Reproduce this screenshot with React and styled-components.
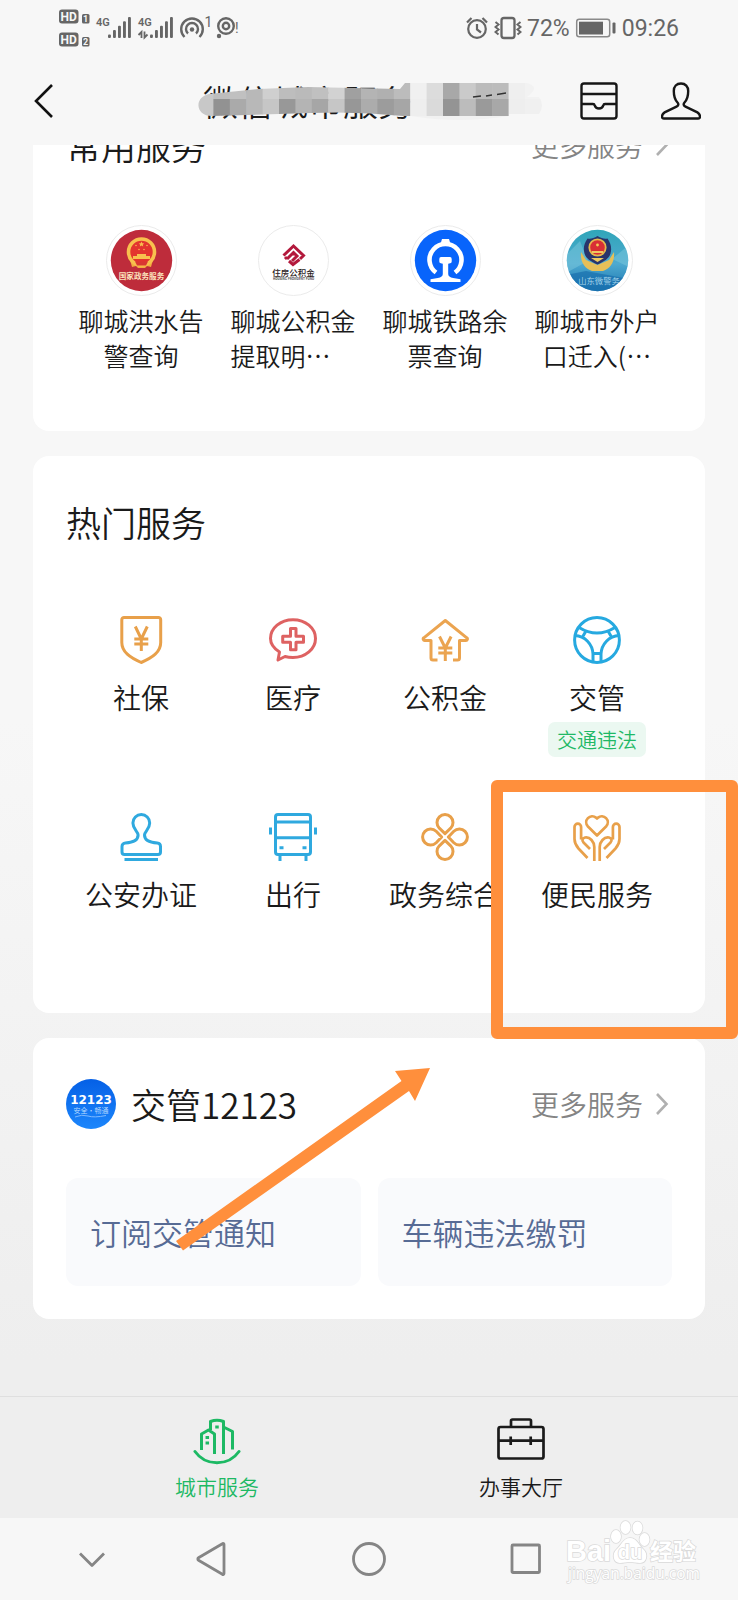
import React, { useState } from 'react';
import styled, { createGlobalStyle } from 'styled-components';

const FONT = '"Noto Sans CJK SC", sans-serif';

const commonServices = [
  { name: '聊城洪水告警查询', lines: ['聊城洪水告', '警查询'], Logo: GovLogo },
  {
    name: '聊城公积金提取明细',
    lines: ['聊城公积金', '提取明…'],
    Logo: FundLogo,
    align: 'left',
  },
  { name: '聊城铁路余票查询', lines: ['聊城铁路余', '票查询'], Logo: RailLogo },
  { name: '聊城市外户口迁入', lines: ['聊城市外户', '口迁入(…'], Logo: PoliceLogo },
];

const hotServices = [
  { name: '社保', Icon: ShieldIcon, color: '#e8a04a' },
  { name: '医疗', Icon: MedicalIcon, color: '#de6262' },
  { name: '公积金', Icon: HouseIcon, color: '#eba450' },
  { name: '交管', Icon: WheelIcon, color: '#26a9e0', badge: '交通违法' },
  { name: '公安办证', Icon: StampIcon, color: '#2fa9df' },
  { name: '出行', Icon: BusIcon, color: '#2fa9df' },
  { name: '政务综合', Icon: CloverIcon, color: '#e8a04a' },
  { name: '便民服务', Icon: HandsIcon, color: '#e8a04a' },
];

const tabs = [
  { name: '城市服务', Icon: CityIcon },
  { name: '办事大厅', Icon: BriefcaseIcon },
];

function App() {
  const [activeTab, setActiveTab] = useState(0);

  return (
    <Page>
      <GlobalStyle />
      <StatusBar>
        <SignalIcons />
        <StatusRight>
          <AlarmIcon />
          <VibrateIcon />
          <span>72%</span>
          <BatteryIcon />
          <span>09:26</span>
        </StatusRight>
      </StatusBar>

      <Header>
        <IconButton type="button" aria-label="返回">
          <svg width="22" height="36" viewBox="0 0 22 36">
            <path d="M19 2 3 18l16 16" fill="none" stroke="#111" strokeWidth="2.6" />
          </svg>
        </IconButton>
        <TitleBox>
          <h1>微信城市服务</h1>
          <Mosaic />
        </TitleBox>
        <HeaderActions>
          <IconButton type="button" aria-label="卡包">
            <InboxIcon />
          </IconButton>
          <IconButton type="button" aria-label="我的">
            <PersonIcon />
          </IconButton>
        </HeaderActions>
      </Header>

      <Content>
        <Card $scrolled>
          <CardHeader>
            <h2>常用服务</h2>
            <MoreLink />
          </CardHeader>
          <LogoGrid>
            {commonServices.map(({ name, lines, Logo, align }) => (
              <ServiceItem type="button" key={name}>
                <Logo />
                <LogoLabel $align={align}>
                  {lines[0]}
                  <br />
                  {lines[1]}
                </LogoLabel>
              </ServiceItem>
            ))}
          </LogoGrid>
        </Card>

        <Card>
          <CardHeader>
            <h2>热门服务</h2>
          </CardHeader>
          <HotGrid>
            {hotServices.map(({ name, Icon, color, badge }) => (
              <ServiceItem type="button" key={name} $color={color}>
                <Icon />
                <HotLabel>{name}</HotLabel>
                {badge && <Badge>{badge}</Badge>}
              </ServiceItem>
            ))}
          </HotGrid>
          <Highlight />
        </Card>

        <Card>
          <CardHeader>
            <TrafficLogo />
            <h2>交管12123</h2>
            <MoreLink />
          </CardHeader>
          <ActionRow>
            <ActionButton type="button">订阅交管通知</ActionButton>
            <ActionButton type="button">车辆违法缴罚</ActionButton>
          </ActionRow>
          <Arrow width="260" height="190" viewBox="0 0 260 190">
            <path d="M257 2 222 5l6.500 10L3 175l7 9.500L236 25l6 10z" fill="#ff8f3c" />
          </Arrow>
        </Card>
      </Content>

      <TabBar>
        {tabs.map(({ name, Icon }, index) => (
          <Tab
            type="button"
            key={name}
            $active={index === activeTab}
            onClick={() => setActiveTab(index)}
          >
            <Icon />
            <span>{name}</span>
          </Tab>
        ))}
      </TabBar>

      <SystemNav>
        <IconButton type="button" aria-label="收起">
          <NavSvg>
            <path d="M6 12.500l12 12 12-12" />
          </NavSvg>
        </IconButton>
        <IconButton type="button" aria-label="后退">
          <NavSvg>
            <path d="M31 3.500v29a1 1 0 0 1-1.600.8L5.500 19.200a1.400 1.400 0 0 1 0-2.400L29.400 2.700a1 1 0 0 1 1.600.8z" />
          </NavSvg>
        </IconButton>
        <IconButton type="button" aria-label="主页">
          <NavSvg>
            <circle cx="18" cy="18" r="15.500" />
          </NavSvg>
        </IconButton>
        <IconButton type="button" aria-label="最近任务">
          <NavSvg>
            <rect x="3" y="4" width="27.500" height="27.500" rx="1" />
          </NavSvg>
        </IconButton>
        <Watermark />
      </SystemNav>
    </Page>
  );
}

export default App;

function MoreLink() {
  return (
    <More href="#more">
      更多服务
      <svg width="14" height="24" viewBox="0 0 14 24">
        <path d="M2 2l9.500 10L2 22" fill="none" stroke="#b0b0b0" strokeWidth="2.600" />
      </svg>
    </More>
  );
}

/* status bar */

function SignalIcons() {
  return (
    <svg width="246" height="56" viewBox="0 0 246 56" fill="#666" fontFamily="Roboto, sans-serif" fontWeight="400">
      <rect x="59" y="9.500" width="19.500" height="14" rx="3" />
      <rect x="59" y="32.500" width="19.500" height="14" rx="3" />
      <rect x="82" y="14" width="7.500" height="9.500" rx="1.500" />
      <rect x="82" y="37" width="7.500" height="9.500" rx="1.500" />
      <g fill="#f7f7f7" fontWeight="700" textAnchor="middle">
        <text x="68.700" y="20.700" fontSize="12">HD</text>
        <text x="68.700" y="43.700" fontSize="12">HD</text>
        <text x="85.700" y="22" fontSize="9">1</text>
        <text x="85.700" y="45" fontSize="9">2</text>
      </g>
      <g fontSize="11" fontWeight="600">
        <text x="96" y="26">4G</text>
        <text x="138" y="26">4G</text>
      </g>
      {[0, 1, 2, 3, 4].map((i) => (
        <rect key={i} x={108 + i * 5} y={34.5 - i * 4.4} width="2.900" height={3.5 + i * 4.4} rx="1" />
      ))}
      {[0, 1, 2, 3, 4].map((i) => (
        <rect key={i} x={150 + i * 5} y={34.5 - i * 4.4} width="2.900" height={3.5 + i * 4.4} rx="1" />
      ))}
      <path d="M141.500 38v-6l-3 3M144.500 31.500v6l3-3" fill="none" stroke="#666" strokeWidth="1.800" />
      <g fill="none" stroke="#666" strokeWidth="2.400">
        <path d="M184.500 37a10.800 10.800 0 1 1 15 0" />
        <path d="M188 33.500a6 6 0 1 1 8 0" />
        <circle cx="226" cy="26" r="7.800" />
        <circle cx="226" cy="26" r="3.200" />
      </g>
      <circle cx="192" cy="29.500" r="2.200" />
      <circle cx="219" cy="36" r="2.200" />
      <text x="204.500" y="27" fontSize="14">1</text>
      <text x="235" y="33" fontSize="14">!</text>
    </svg>
  );
}

function AlarmIcon() {
  return (
    <svg width="24" height="24" viewBox="0 0 24 24" fill="none" stroke="#666" strokeWidth="2.200">
      <circle cx="12" cy="13" r="8.800" />
      <path d="M12 8v5.500l4 3M2 6.500 6.500 2M22 6.500 17.500 2" />
    </svg>
  );
}

function VibrateIcon() {
  return (
    <svg width="28" height="24" viewBox="0 0 28 24" fill="none" stroke="#666" strokeWidth="2.300">
      <rect x="7.500" y="2" width="13" height="20" rx="2.500" />
      <path d="M1.500 6l3 2.500-3 2.500 3 2.500-3 2.500 3 2.500M26.500 6l-3 2.500 3 2.500-3 2.500 3 2.500-3 2.500" strokeWidth="2" />
    </svg>
  );
}

function BatteryIcon() {
  return (
    <svg width="42" height="22" viewBox="0 0 42 22">
      <rect x="1.700" y="2.200" width="33" height="17.600" rx="2.500" fill="none" stroke="#8a8a8a" strokeWidth="1.500" />
      <rect x="4" y="4.700" width="24" height="12.800" fill="#666" />
      <rect x="37.500" y="5.500" width="3" height="11" rx="1" fill="#666" />
    </svg>
  );
}

/* header */

const mosaicTop = [
  '#c8c8c8', '#bdbdbd', '#c0c0c0', '#b8b8b8', '#cfcfcf', '#bdbdbd', '#bababa',
  '#c0c0c0', '#d2d2d2', '#a0a0a0', '#b4b4b4', '#b0b0b0', '#bcbcbc', '#f0f0f0',
  '#dcdcdc', '#a8a8a8', '#cacaca', '#bbbbbb', '#bcbcbc', '#efefef', '#f2f2f2',
];
const mosaicBottom = [
  '#c8c8c8', '#929292', '#aaaaaa', '#b8b8b8', '#c6c6c6', '#989898', '#b4b4b4',
  '#a6a6a6', '#c6c6c6', '#979797', '#acacac', '#9c9c9c', '#a6a6a6', '#eeeeee',
  '#dadada', '#949494', '#bcbcbc', '#9a9a9a', '#a8a8a8', '#eeeeee', '#f0f0f0',
];

// Blurred-out part of the title
function Mosaic() {
  return (
    <MosaicSvg width="346" height="40" viewBox="0 0 346 40">
      <clipPath id="brush">
        <path d="M11 13 60 8 110 6 202 8 207 2h122q14 4 0 14h12q6 8 0 17h-30v2q-50 8-98 0l-8 0q-46-5-92-3L14 35C-3 35-4 16 11 13z" />
      </clipPath>
      <g clipPath="url(#brush)">
        {mosaicTop.map((color, i) => (
          <rect key={i} x={i * 16.4 - 1} y="0" width="17" height="18.500" fill={color} />
        ))}
        {mosaicBottom.map((color, i) => (
          <rect key={i} x={i * 16.4 - 1} y="18" width="17" height="17" fill={color} />
        ))}
        <rect x="212" y="35" width="130" height="5" fill="#f1f1f1" />
      </g>
      <path d="M275 16l8-1M288 15l6-1M299 13.500l9-1.500" stroke="#333" strokeWidth="1.300" />
    </MosaicSvg>
  );
}

function InboxIcon() {
  return (
    <svg width="38" height="38" viewBox="0 0 38 38" fill="none" stroke="#161616" strokeWidth="2.400">
      <rect x="1.500" y="1.500" width="35" height="35" rx="2.500" />
      <path d="M1.500 12h35M1.500 22h11.500c1 0 1.500.5 1.700 1.400a4.500 4.500 0 0 0 8.600 0c.2-.9.7-1.400 1.700-1.400h11.500" />
    </svg>
  );
}

function PersonIcon() {
  return (
    <svg width="40" height="38" viewBox="0 0 40 38" fill="none" stroke="#161616" strokeWidth="2.400">
      <path d="M20 1.500c-4.500 0-7.200 3-7.200 7.500 0 4.500 1.300 9 3.700 11.500 1.500 1.600.8 3.400-1 4.200L3.600 30.400C1.500 31.600 1 33 1 34.800c0 1.200.6 1.700 1.800 1.700h34.400c1.200 0 1.800-.5 1.800-1.700 0-1.800-.5-3.200-2.600-4.400l-11.900-5.700c-1.800-.8-2.500-2.600-1-4.200 2.400-2.500 3.700-7 3.700-11.500 0-4.500-2.700-7.500-7.200-7.500z" />
    </svg>
  );
}

/* round service logos */

function GovLogo() {
  return (
    <LogoSvg viewBox="0 0 71 71">
      <circle cx="35.500" cy="35.500" r="35" fill="#fff" stroke="#ebebeb" />
      <circle cx="35.500" cy="35.500" r="30.700" fill="#be2c3b" />
      <path d="M24 35h23l-2 7-4-1-2 2h-7l-2-2-4 1z" fill="#f3ac3f" />
      <circle cx="35.500" cy="27" r="13" fill="#e3342f" stroke="#f8c04e" strokeWidth="3.600" />
      <path d="M27 34h17v-3h-4v-2h-9v2h-4z" fill="#f8c04e" />
      <path d="M29 36.500h13l-2 4h-9z" fill="#d93832" />
      <path d="M35.500 16.500l.8 1.700 1.900.2-1.400 1.300.4 1.900-1.700-1-1.700 1 .4-1.900-1.400-1.300 1.900-.2z" fill="#f8c04e" />
      <g fill="#f8b34b">
        <circle cx="30" cy="20.500" r=".8" />
        <circle cx="41" cy="20.500" r=".8" />
        <circle cx="33" cy="24.500" r=".8" />
        <circle cx="38" cy="24.500" r=".8" />
      </g>
      <text x="35.500" y="53.500" fontSize="7.600" fontWeight="700" textAnchor="middle" fill="#fbe3bd">
        国家政务服务
      </text>
    </LogoSvg>
  );
}

function FundLogo() {
  return (
    <LogoSvg viewBox="0 0 71 71">
      <circle cx="35.500" cy="35.500" r="35" fill="#fff" stroke="#ebebeb" />
      <g fill="none" stroke="#b3193c" strokeWidth="3">
        <path d="M25.500 30.500l10-9.500 10 9.500-3.500 3.500M29 34l6.500-6.500 3.500 3.500-5 5M29 34l-2-2M41.500 34.500l-6.500 5-4-3.500M35 27.500v3" />
      </g>
      <text x="35.500" y="50.500" fontSize="8.500" fontWeight="500" textAnchor="middle" fill="#2b2222">
        住房公积金
      </text>
      <text x="35.500" y="55" fontSize="3" fontWeight="700" textAnchor="middle" fill="#444">
        HOUSING PROVIDENT FUND
      </text>
    </LogoSvg>
  );
}

function RailLogo() {
  return (
    <LogoSvg viewBox="0 0 71 71">
      <circle cx="35.500" cy="35.500" r="35" fill="#fff" stroke="#ebebeb" />
      <circle cx="35.500" cy="35.500" r="30.700" fill="#0864fb" />
      <path d="M26 47.500a16 15.800 0 1 1 19 0" fill="none" stroke="#fff" strokeWidth="4.600" />
      <path d="M32 14h7l1.500 5h-10z" fill="#fff" />
      <path d="M31 32h9q1.700 0 1.700 2v2.500q0 1.500-1.500 1.700l-2 .5V49q0 3 5 4l7.300 1.200V57h-30v-2.800L27.800 53q5-1 5-4V38.700l-2-.5q-1.500-.2-1.500-1.700V34q0-2 1.700-2z" fill="#fff" />
    </LogoSvg>
  );
}

function PoliceLogo() {
  return (
    <LogoSvg viewBox="0 0 71 71">
      <defs>
        <linearGradient id="teal" x1="0" y1="0" x2="0" y2="1">
          <stop offset="0" stopColor="#2fa5b8" />
          <stop offset=".55" stopColor="#4eaad0" />
          <stop offset="1" stopColor="#1873b0" />
        </linearGradient>
        <clipPath id="policeClip">
          <circle cx="35.500" cy="35.500" r="30.700" />
        </clipPath>
      </defs>
      <circle cx="35.500" cy="35.500" r="35" fill="#fff" stroke="#ebebeb" />
      <g clipPath="url(#policeClip)">
        <rect x="4" y="4" width="63" height="63" fill="url(#teal)" />
        <path d="M4 30l14-14 8 20-22 12zM67 20L50 34l17 8z" fill="#7cc8dc" opacity=".5" />
        <path d="M4 50l20-4 43 8v13H4z" fill="#1a6fae" opacity=".7" />
        <path d="M19 27c-1 10 4 17 11 19h11c7-2 12-9 11-19l-5 8-11.500 5L24 35z" fill="#e6bf58" />
        <path d="M35.500 11c4 2.500 7 3 10 2.500 3 4.500 4 8 3.500 12.500-.6 6.500-5.500 10-13.500 13.500C27.500 36 22.600 32.500 22 26c-.5-4.500.5-8 3.500-12.500 3 .5 6 0 10-2.500z" fill="#29356b" />
        <circle cx="35.500" cy="22.500" r="8.200" fill="#d92f35" stroke="#e5b84d" strokeWidth="1.800" />
        <path d="M30 26h11v2H30zM29 33h13l-6.500 4z" fill="#efc95f" />
        <circle cx="35.500" cy="20" r="1.400" fill="#f3cd55" />
        <text x="37" y="59" fontSize="8.300" textAnchor="middle" fill="#a9d7ec">
          山东微警务
        </text>
      </g>
    </LogoSvg>
  );
}

function TrafficLogo() {
  return (
    <svg width="50" height="50" viewBox="0 0 50 50">
      <defs>
        <linearGradient id="blue" x1="0" y1="0" x2="0" y2="1">
          <stop offset="0" stopColor="#0560e6" />
          <stop offset="1" stopColor="#1c86fb" />
        </linearGradient>
      </defs>
      <circle cx="25" cy="25" r="25" fill="url(#blue)" />
      <text x="25" y="25" fontSize="12" fontWeight="700" fontFamily="DejaVu Sans" textAnchor="middle" fill="#fff">
        12123
      </text>
      <text x="25" y="34" fontSize="7" textAnchor="middle" fill="#b9dcff">
        安全·畅通
      </text>
      <path d="M9 38q7-3 13-1t18-.500" fill="none" stroke="#7fbaff" />
    </svg>
  );
}

/* line icons, drawn in the colour of the item */

function ShieldIcon() {
  return (
    <LineSvg viewBox="0 0 48 48">
      <path d="M7 1.500h34.500a2.200 2.200 0 0 1 2.200 2.200V26.500c0 9.500-8 15-19.500 20C13 41.500 4.800 36 4.800 26.500V3.700A2.200 2.200 0 0 1 7 1.500z" />
      <path d="M18.300 10.500l6 12.500 6-12.500M24.300 23v12M17.300 23h14M17.300 28h14" />
    </LineSvg>
  );
}

function MedicalIcon() {
  return (
    <LineSvg viewBox="0 0 48 48">
      <path d="M9 44l1.500-8C5 32.500 1.500 28 1.500 22.500 1.500 12 11.500 3.700 24 3.700S46.500 12 46.500 22.500 36.500 41.500 24 41.500c-3 0-5.500-.3-8-1z" />
      <path d="M21.500 12.500h5.500v7.700h7.500v6H27v7.600h-5.500v-7.600H13.700v-6h7.800z" />
    </LineSvg>
  );
}

function HouseIcon() {
  return (
    <LineSvg viewBox="0 0 48 48">
      <path d="M16.500 44H12a2 2 0 0 1-2-2V24.500H3.800a1.500 1.500 0 0 1-1-2.700L24.300 4.500l21.500 17.300a1.500 1.500 0 0 1-1 2.700H38.500V42a2 2 0 0 1-2 2H32" />
      <path d="M18.500 20.500l5.800 11.500 5.800-11.500M24.300 32v13M17.300 32h14M17.300 37h14" />
    </LineSvg>
  );
}

function WheelIcon() {
  return (
    <LineSvg viewBox="0 0 48 48">
      <circle cx="24" cy="24" r="22.400" />
      <path d="M6 11.500Q24 22.500 42 11.500M1.800 19.500C12 20 19.500 28 20 38v8M46.200 19.500C36 20 28.500 28 28 38v8M20 37.500h8M9.500 21l3.500-6M38.500 21 35 15" />
    </LineSvg>
  );
}

function StampIcon() {
  return (
    <LineSvg viewBox="0 0 48 48">
      <path d="M7.500 41.500h33.500a2.500 2.500 0 0 0 2.500-2.500v-5.500a3.500 3.500 0 0 0-3.200-3.500C31 29.500 27.500 26.500 27.500 22c0-3.500 5.200-5.500 5.200-12a8.400 8.400 0 0 0-16.800 0c0 6.500 5.200 8.500 5.200 12 0 4.500-3.500 7.500-12.800 8A3.500 3.500 0 0 0 5 33.500V39a2.500 2.500 0 0 0 2.500 2.500zM7.500 46.500h33.500" />
    </LineSvg>
  );
}

function BusIcon() {
  return (
    <LineSvg viewBox="0 0 48 48">
      <rect x="6.500" y="1.500" width="35" height="40" rx="2.500" />
      <path d="M6.500 9h35M6.500 24.800h35M10.500 34.800h4M33.500 34.800h4M11 42v6M37 42v6M1.500 14.500v7M46.500 14.500v7" />
    </LineSvg>
  );
}

function CloverIcon() {
  return (
    <LineSvg viewBox="0 0 48 48">
      {[0, 90, 180, 270].map((angle) => (
        <path
          key={angle}
          d="M24 20.700l-5.700-5.500A8 8 0 1 1 29.700 15.200z"
          transform={`rotate(${angle} 24 24)`}
        />
      ))}
    </LineSvg>
  );
}

function HandsIcon() {
  const hand =
    'M14.500 45 5.500 35.500C2.500 32 1.500 30 1.500 26V14a3.300 3.300 0 0 1 6.600 0v12.500M17 36l-6.500-6.500c-2-2-1-4.500 1.500-5 5-1 9.300 4.500 9.300 9.500v14';
  return (
    <LineSvg viewBox="0 0 48 48" $thin>
      <path d="M24 22.500 14.700 13.200a6 6 0 0 1 8.300-8.600l1 1 1-1a6 6 0 0 1 8.300 8.600z" />
      <path d={hand} />
      <path d={hand} transform="matrix(-1 0 0 1 48 0)" />
    </LineSvg>
  );
}

function CityIcon() {
  return (
    <LineSvg viewBox="0 0 48 48">
      <path d="M2 34.500C12.500 49.500 35.500 49.500 46 34.500" strokeLinecap="round" />
      <path d="M8.500 33V17l7-4 6 4V37M17.500 13V4.500q6.500-2.500 13 0V37M31.500 10.500l8 4v18" />
      <path d="M14.300 19v3M14.300 24.500v3M24 8.500v3" strokeWidth="3.500" />
    </LineSvg>
  );
}

function BriefcaseIcon() {
  return (
    <LineSvg viewBox="0 0 48 48" $thin>
      <rect x="1.500" y="10" width="45" height="31.500" rx="2" />
      <path d="M14 10V4q0-1.500 1.500-1.500h17Q34 2.500 34 4v6M1.500 23.700h45M13.700 19.500v8.500M33.700 19.500v8.500" />
    </LineSvg>
  );
}

function Watermark() {
  return (
    <WatermarkSvg width="140" height="72" viewBox="0 0 140 72" aria-hidden="true">
      <g fill="#fff" stroke="#dadada" strokeWidth="1.500" paintOrder="stroke">
        <text x="4" y="45" fontSize="29" fontWeight="700" fontFamily="Liberation Sans">
          Bai
        </text>
        <ellipse cx="54" cy="20.500" rx="5" ry="6.500" />
        <ellipse cx="63.500" cy="11.500" rx="5" ry="6.500" />
        <ellipse cx="75.500" cy="12" rx="5" ry="6.500" />
        <ellipse cx="82.500" cy="23.500" rx="5" ry="6.500" />
        <path d="M68 22c-7 0-9 8-14 12-4 4-3 13 4 13 4 0 6-1 10-1s6 1 10 1c7 0 8-9 4-13-5-4-7-12-14-12z" />
        <text x="68" y="43" fontSize="20" fontWeight="700" fontFamily="Liberation Sans" textAnchor="middle">
          du
        </text>
        <text x="88" y="44" fontSize="23" fontWeight="700">
          经验
        </text>
        <text x="6" y="63" fontSize="15.500" fontWeight="400" fontFamily="Open Sans">
          jingyan.baidu.com
        </text>
      </g>
    </WatermarkSvg>
  );
}

const GlobalStyle = createGlobalStyle`
  * {
    box-sizing: border-box;
  }
  body {
    margin: 0;
    background: #f7f7f7;
    font-family: ${FONT};
    font-weight: 350;
    color: #1a1a1a;
  }
  h1, h2 {
    margin: 0;
    font-weight: inherit;
  }
  button {
    padding: 0;
    border: none;
    background: none;
    color: inherit;
    font-family: inherit;
    font-weight: inherit;
    cursor: pointer;
  }
  svg {
    display: block;
    flex-shrink: 0;
  }
`;

const Page = styled.div`
  min-height: 100vh;
  display: flex;
  flex-direction: column;
  overflow: hidden;
  background: linear-gradient(#f7f7f7 45%, #eeeeee 85%);
`;

const StatusBar = styled.div`
  display: flex;
  justify-content: space-between;
  height: 56px;
`;

const StatusRight = styled.div`
  display: flex;
  align-items: center;
  gap: 5px;
  padding-right: 59px;
  font-family: Roboto, sans-serif;
  font-size: 23px;
  font-weight: 400;
  color: #666666;
`;

const Header = styled.header`
  display: flex;
  align-items: center;
  height: 89px;
  padding: 0 37px 0 33px;
`;

const IconButton = styled.button`
  display: flex;
  align-items: center;
  justify-content: center;
`;

const TitleBox = styled.div`
  position: relative;
  flex: 1;
  margin-left: 148px;

  h1 {
    font-size: 35px;
    line-height: 48px;
    white-space: nowrap;
  }
`;

const MosaicSvg = styled.svg`
  position: absolute;
  left: -5px;
  top: 4px;
`;

const HeaderActions = styled.div`
  display: flex;
  gap: 43px;
`;

const Content = styled.main`
  flex: 1;
  display: flex;
  flex-direction: column;
  gap: 25px;
  padding: 0 33px 76px;
  overflow: hidden;
`;

const Card = styled.section`
  position: relative;
  padding: 33px 0;
  margin-top: ${({ $scrolled }) => ($scrolled ? '-66px' : '0')};
  border-radius: 16px;
  background: #ffffff;
`;

const CardHeader = styled.div`
  display: flex;
  align-items: center;
  height: 66px;
  padding: 0 33px;

  h2 {
    flex: 1;
    font-size: 35px;
    line-height: 50px;
  }
  svg + h2 {
    margin-left: 15px;
  }
`;

const More = styled.a`
  display: flex;
  align-items: center;
  gap: 12px;
  padding-right: 3px;
  font-size: 28px;
  line-height: 40px;
  color: #848484;
  text-decoration: none;
`;

const LogoGrid = styled.div`
  display: grid;
  grid-template-columns: repeat(4, 1fr);
  padding: 47px 32px 25px;
`;

const HotGrid = styled.div`
  display: grid;
  grid-template-columns: repeat(4, 1fr);
  grid-auto-rows: 141px;
  row-gap: 56px;
  padding: 61px 32px 26px;
`;

const ServiceItem = styled.button`
  display: flex;
  flex-direction: column;
  align-items: center;

  svg {
    color: ${({ $color }) => $color};
  }
`;

const LogoSvg = styled.svg`
  width: 71px;
  height: 71px;
  font-family: ${FONT};
`;

const LineSvg = styled.svg`
  width: 48px;
  height: 48px;
  fill: none;
  stroke: currentColor;
  stroke-width: ${({ $thin }) => ($thin ? 2.7 : 3)};
  stroke-linejoin: round;
`;

const LogoLabel = styled.span`
  width: 125px;
  margin-top: 7px;
  font-size: 25px;
  line-height: 35px;
  text-align: ${({ $align }) => $align || 'center'};
`;

const HotLabel = styled.span`
  margin-top: 13px;
  font-size: 28px;
  line-height: 40px;
  white-space: nowrap;
`;

const Badge = styled.span`
  margin-top: 5px;
  padding: 0 9px;
  border-radius: 7px;
  background: #ebf8f1;
  font-size: 20px;
  line-height: 35px;
  white-space: nowrap;
  color: #1fb866;
`;

const Highlight = styled.div`
  position: absolute;
  right: -33px;
  bottom: -26px;
  z-index: 1;
  width: 247px;
  height: 259px;
  border: 12px solid #ff8f3c;
  border-radius: 6px;
  pointer-events: none;
`;

const Arrow = styled.svg`
  position: absolute;
  left: 140px;
  top: 28px;
  pointer-events: none;
`;

const ActionRow = styled.div`
  display: grid;
  grid-template-columns: 1fr 1fr;
  gap: 17px;
  padding: 41px 33px 0;
`;

const ActionButton = styled.button`
  height: 108px;
  border-radius: 12px;
  font-size: 31px;
  line-height: 44px;
  text-align: left;
  white-space: nowrap;

  && {
    padding: 0 24px;
    background: #f9fafc;
    color: #576b95;
  }
`;

const TabBar = styled.nav`
  display: grid;
  grid-template-columns: 1fr 1fr;
  padding: 20px 65px 17px;
  border-top: 1px solid #dfdfdf;
  background: #eeeeee;
`;

const Tab = styled.button`
  display: flex;
  flex-direction: column;
  align-items: center;
  gap: 6px;
  font-size: 21px;
  line-height: 30px;

  && {
    color: ${({ $active }) => ($active ? '#1db964' : '#1a1a1a')};
  }
`;

const SystemNav = styled.div`
  position: relative;
  display: grid;
  grid-template-columns: 3fr 3fr 5fr 3fr 3fr;
  height: 82px;
  padding: 0 33px;
  background: #f7f7f7;
`;

const NavSvg = styled.svg.attrs({ viewBox: '0 0 36 36' })`
  width: 36px;
  height: 36px;
  fill: none;
  stroke: #858585;
  stroke-width: 2.8;
  stroke-linejoin: round;
`;

const WatermarkSvg = styled.svg`
  position: absolute;
  right: 36px;
  bottom: 12px;
  pointer-events: none;
`;
